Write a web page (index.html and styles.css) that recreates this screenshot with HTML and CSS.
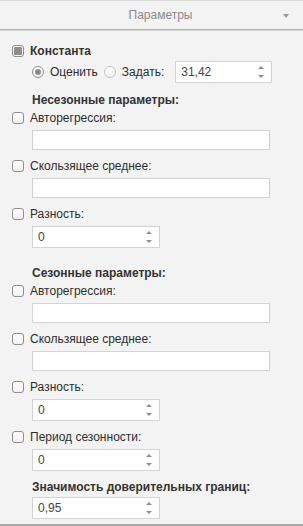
FILE: index.html
```html
<!DOCTYPE html>
<html lang="ru">
<head>
<meta charset="utf-8">
<link rel="stylesheet" href="styles.css">
</head>
<body>
<div class="panel">
  <div class="header">
    <span class="title">Параметры</span>
    <span class="caret"></span>
  </div>
  <div class="content">
    <div class="row row-const">
      <span class="cb cb-ind"></span><span class="bold">Константа</span>
    </div>
    <div class="radio-row">
      <span class="radio radio-on"></span><span class="rlabel">Оценить</span>
      <span class="radio"></span><span class="rlabel">Задать:</span>
      <div class="spin spin-const"><span class="val">31,42</span><span class="arrows"><i class="up"></i><i class="down"></i></span></div>
    </div>

    <div class="heading h-first">Несезонные параметры:</div>
    <div class="row row-tight"><span class="cb"></span><span>Авторегрессия:</span></div>
    <div class="field"></div>
    <div class="row"><span class="cb"></span><span>Скользящее среднее:</span></div>
    <div class="field"></div>
    <div class="row"><span class="cb"></span><span>Разность:</span></div>
    <div class="spin"><span class="val">0</span><span class="arrows"><i class="up"></i><i class="down"></i></span></div>

    <div class="heading h-second">Сезонные параметры:</div>
    <div class="row row-tight"><span class="cb"></span><span>Авторегрессия:</span></div>
    <div class="field"></div>
    <div class="row"><span class="cb"></span><span>Скользящее среднее:</span></div>
    <div class="field"></div>
    <div class="row"><span class="cb"></span><span>Разность:</span></div>
    <div class="spin"><span class="val">0</span><span class="arrows"><i class="up"></i><i class="down"></i></span></div>
    <div class="row row-after-spin"><span class="cb"></span><span>Период сезонности:</span></div>
    <div class="spin"><span class="val">0</span><span class="arrows"><i class="up"></i><i class="down"></i></span></div>

    <div class="heading h-third">Значимость доверительных границ:</div>
    <div class="spin spin-last"><span class="val">0,95</span><span class="arrows"><i class="up"></i><i class="down"></i></span></div>
  </div>
</div>
</body>
</html>
```
FILE: styles.css
```css
* { box-sizing: border-box; }
html, body { margin: 0; padding: 0; }
body {
  background: #f3f3f3;
  font-family: "Liberation Sans", Arial, sans-serif;
  font-size: 12px;
  color: #2e2e2e;
}
.panel {
  width: 303px;
  height: 526px;
  border-bottom: 2px solid #a9a9a9;
  background: #f3f3f3;
  overflow: hidden;
}
.header {
  height: 30px;
  border-top: 1px solid #dcdcdc;
  border-bottom: 1px solid #b3b3b3;
  box-shadow: 0 1px 0 #dedede;
  display: flex;
  align-items: center;
  justify-content: center;
  position: relative;
}
.title {
  color: #8a8a8a;
  font-size: 12px;
  margin-left: 18px;
}
.caret {
  position: absolute;
  right: 14px;
  top: 13px;
  width: 0; height: 0;
  border-left: 3px solid transparent;
  border-right: 3px solid transparent;
  border-top: 4px solid #9a9a9a;
}
.content {
  padding-left: 12px;
  display: flex;
  flex-direction: column;
  align-items: flex-start;
}
.row {
  height: 16px;
  display: flex;
  align-items: center;
  gap: 6px;
  margin-top: 8px;
  white-space: nowrap;
}
.row-const { margin-top: 13px; }
.row-tight { margin-top: 2px; }
.row-after-spin { margin-top: 8px; }
.bold { font-weight: bold; color: #333; }
.cb {
  width: 12px; height: 12px;
  border: 1px solid #8f8f8f;
  border-radius: 3px;
  background: linear-gradient(#ffffff, #f1f1f1);
  display: flex;
  align-items: center;
  justify-content: center;
  flex: none;
}
.cb-ind::after {
  content: "";
  width: 8px; height: 8px;
  background: #8e8e8e;
  border-radius: 1px;
}
.radio-row {
  margin-top: 2px;
  margin-left: 20px;
  height: 22px;
  display: flex;
  align-items: center;
  white-space: nowrap;
}
.radio {
  width: 12px; height: 12px;
  border: 1px solid #c4c4c4;
  border-radius: 50%;
  background: linear-gradient(#ffffff, #f1f1f1);
  display: flex;
  align-items: center;
  justify-content: center;
  flex: none;
}
.radio-on { border-color: #8e8e8e; }
.radio-on::after {
  content: "";
  width: 6px; height: 6px;
  border-radius: 50%;
  background: #8a8a8a;
}
.rlabel { margin-left: 6px; margin-right: 6px; }
.heading {
  height: 16px;
  line-height: 16px;
  margin-left: 20px;
  font-weight: bold;
  color: #333;
  white-space: nowrap;
}
.h-first { margin-top: 9px; }
.h-second { margin-top: 17px; }
.h-third { margin-top: 8px; }
.field {
  margin-left: 20px;
  margin-top: 4px;
  width: 238px;
  height: 20px;
  background: #fff;
  border: 1px solid #d3d3d3;
}
.spin {
  margin-left: 20px;
  margin-top: 4px;
  width: 128px;
  height: 22px;
  background: #fff;
  border: 1px solid #d3d3d3;
  display: flex;
  align-items: center;
  justify-content: space-between;
  padding-left: 5px;
  padding-right: 7px;
  color: #444;
}
.spin-const { margin: 0 0 0 5px; width: 97px; }
.spin-last { margin-top: 2px; }
.arrows {
  display: flex;
  flex-direction: column;
  gap: 6px;
  align-items: center;
}
.arrows i {
  display: block;
  width: 0; height: 0;
  border-left: 3px solid transparent;
  border-right: 3px solid transparent;
}
.arrows .up { border-bottom: 3px solid #8f8f8f; }
.arrows .down { border-top: 3px solid #8f8f8f; }
```
